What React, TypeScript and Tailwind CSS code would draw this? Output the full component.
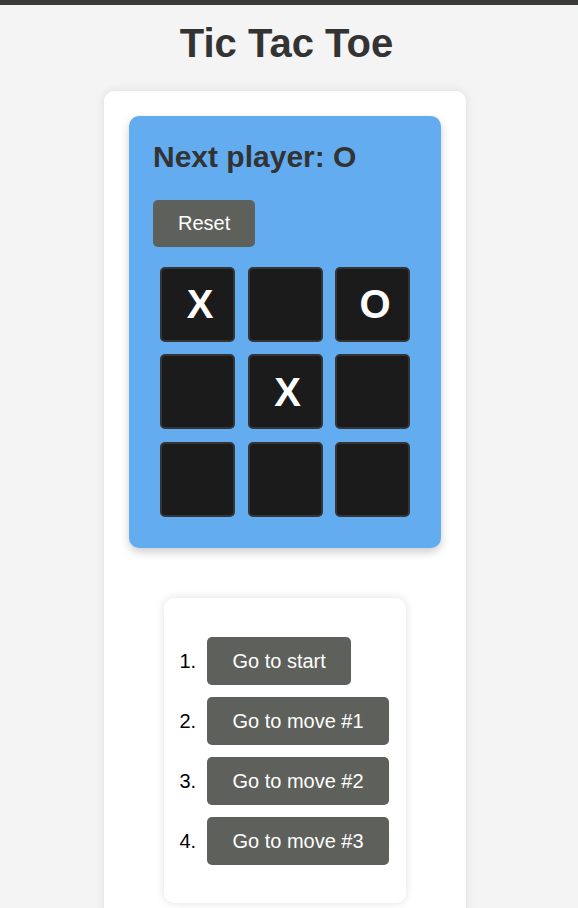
import React from 'react';

const squares = ['X', '', 'O', '', 'X', '', '', '', ''];
const moves = ['Go to start', 'Go to move #1', 'Go to move #2', 'Go to move #3'];

const App: React.FC = () => {
  return (
    <div className="min-h-screen bg-[#f4f4f4] pr-[8px] font-['Liberation_Sans',Arial,sans-serif]">
      {/* top strip */}
      <div className="-mr-[8px] h-[5px] bg-[#393b36]"></div>

      <h1 className="mt-[15px] pl-[3px] text-center text-[40px] leading-[46px] font-bold text-[#333]">Tic Tac Toe</h1>

      <div className="mx-auto mt-[25px] w-[362px] rounded-[10px] bg-white p-[25px] pb-10 shadow-[0_0_10px_rgba(0,0,0,0.1)]">
        {/* board panel */}
        <div className="rounded-[10px] bg-[#63acf0] p-6 pb-[31px] shadow-[0_4px_10px_rgba(0,0,0,0.2)]">
          <div className="text-[30px] leading-[34.5px] font-bold text-[#333]">Next player: O</div>
          <button className="mt-[25px] h-[47px] rounded-[5px] bg-[#5e615b] px-[25px] text-[20px] text-white">
            Reset
          </button>
          <div className="mx-auto mt-5 grid w-fit grid-cols-[repeat(3,75px)] gap-[12.5px]">
            {squares.map((v, i) => (
              <button
                key={i}
                className="flex h-[75px] w-[75px] items-center justify-center rounded-[5px] border-2 border-[#353535] bg-[#1b1b1b] pl-[5px] text-[40px] font-bold text-white"
              >
                {v}
              </button>
            ))}
          </div>
        </div>

        {/* move history */}
        <div className="mx-auto mt-[50px] w-fit rounded-[10px] bg-white pt-[39px] pb-[38px] pl-[15px] pr-[17px] shadow-[0_0_10px_rgba(0,0,0,0.12)]">
          <ol className="flex flex-col gap-[12.3px]">
            {moves.map((m, i) => (
              <li key={m} className="flex items-center gap-[11px] text-[20px] text-black">
                <span className="w-[17px]">{i + 1}.</span>
                <button className="h-[48px] rounded-[5px] bg-[#5e615b] px-[25px] text-[20px] text-white">{m}</button>
              </li>
            ))}
          </ol>
        </div>
      </div>
    </div>
  );
};

export default App;
